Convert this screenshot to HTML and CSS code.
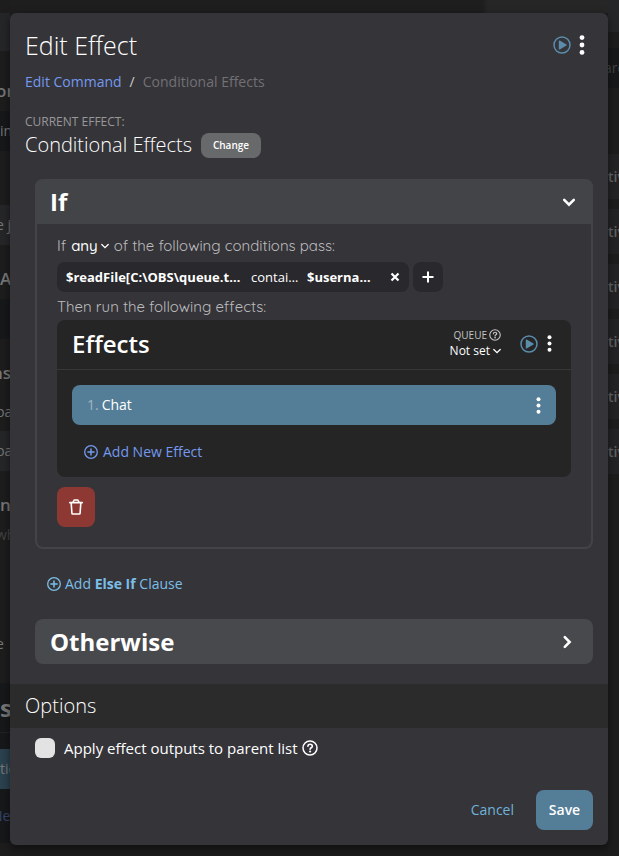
FILE: index.html
```html
<!DOCTYPE html>
<html lang="en">
<head>
<meta charset="utf-8">
<meta name="viewport" content="width=device-width, initial-scale=1">
<title>Edit Effect</title>
<link rel="stylesheet" href="styles.css">
</head>
<body>
<svg class="defs" aria-hidden="true">
  <symbol id="play" viewBox="0 0 18 18"><circle cx="9" cy="9" r="8" fill="none" stroke="currentColor" stroke-width="1.5"/><path d="M5.800 5v8c0 .5.5.8 1 .5l6.600-3.900c.5-.3.5-.9 0-1.200L6.800 4.500c-.5-.3-1 0-1 .5z" fill="currentColor"/></symbol>
  <symbol id="dots" viewBox="0 0 6 20"><circle cx="3" cy="2.600" r="2.400"/><circle cx="3" cy="10" r="2.400"/><circle cx="3" cy="17.400" r="2.400"/></symbol>
  <symbol id="chevron" viewBox="0 0 14 14"><path d="M2.200 4.800 7 9.600l4.800-4.800" fill="none" stroke="currentColor" stroke-width="2.600" stroke-linecap="round"/></symbol>
  <symbol id="caret" viewBox="0 0 8 8"><path d="M.8 2.500 4 5.700l3.200-3.200" fill="none" stroke="currentColor" stroke-width="1.300" stroke-linecap="round"/></symbol>
  <symbol id="help" viewBox="0 0 16 16"><circle cx="8" cy="8" r="7" fill="none" stroke="currentColor" stroke-width="1.500"/><path d="M5.900 6.300C6 5 6.900 4.300 8.100 4.300s2.200.8 2.200 1.900c0 1.600-2.200 1.500-2.200 3" fill="none" stroke="currentColor" stroke-width="1.600" stroke-linecap="round"/><circle cx="8.100" cy="11.500" r="1.100" fill="currentColor"/></symbol>
  <symbol id="add" viewBox="0 0 14 14"><circle cx="7" cy="7" r="6.300" fill="none" stroke="currentColor" stroke-width="1.300"/><path d="M7 3.900v6.200M3.900 7h6.200" stroke="currentColor" stroke-width="1.500" stroke-linecap="round"/></symbol>
</svg>
<div class="page">
  <div class="strip left" aria-hidden="true">
    <div class="h13"></div>
    <div class="h38 lit"></div>
    <div class="h60 low bold cut">or</div>
    <div class="h40 dark">in</div>
    <div class="h54"></div>
    <div class="h40 lit cut">e j</div>
    <div class="h54 low bold">A</div>
    <div class="h40 dark"></div>
    <div class="h54 low bold cut-more">ns</div>
    <div class="h38 cut">pa</div>
    <div class="h40 lit cut">pa</div>
    <div class="h54 low bold">n</div>
    <div class="h40 faint top cut">wh</div>
    <div class="h60"></div>
    <div class="h38 cut">e</div>
    <div class="h20"></div>
    <div class="h50 dark big line">s</div>
    <div class="h16 dark"></div>
    <div class="h40 blue">tic</div>
    <div class="h54 dark link cut-more">Ne</div>
    <div class="rest"></div>
  </div>
  <main class="stage">
    <section class="modal" role="dialog" aria-labelledby="title">
      <header class="head">
        <div class="row">
          <h1 id="title">Edit Effect</h1>
          <button class="icon accent" aria-label="Run effect"><svg class="i18"><use href="#play"/></svg></button>
          <button class="icon" aria-label="More options"><svg class="dots"><use href="#dots"/></svg></button>
        </div>
        <nav class="crumbs"><a href="#">Edit Command</a><b>/</b><span>Conditional Effects</span></nav>
      </header>
      <div class="current">
        <div class="label">CURRENT EFFECT:</div>
        <div class="row"><h2>Conditional Effects</h2><button class="change">Change</button></div>
      </div>
      <div class="clauses">
        <section class="clause">
          <button class="bar"><span>If</span><svg class="i14"><use href="#chevron"/></svg></button>
          <div class="body">
            <div class="sentence">If <button class="pick">any<svg class="i8"><use href="#caret"/></svg></button> of the following conditions pass:</div>
            <div class="conditions">
              <div class="condition"><b class="lhs">$readFile[C:\OBS\queue.txt]</b><span class="op">contains</span><b class="rhs">$username</b><button class="icon" aria-label="Remove condition"><svg class="i10" viewBox="0 0 10 10"><path d="M1.500 1.500l7 7M8.500 1.500l-7 7" stroke="currentColor" stroke-width="2.200"/></svg></button></div>
              <button class="plus" aria-label="Add condition"><svg class="i12" viewBox="0 0 12 12"><path d="M6 .5v11M.5 6h11" stroke="currentColor" stroke-width="2"/></svg></button>
            </div>
            <div class="then">Then run the following effects:</div>
            <section class="effects">
              <header class="effects-head">
                <h3>Effects</h3>
                <div class="queue"><div class="queue-label">QUEUE<svg class="i12"><use href="#help"/></svg></div><button class="pick small">Not set<svg class="i8"><use href="#caret"/></svg></button></div>
                <button class="icon accent" aria-label="Run effects"><svg class="i18"><use href="#play"/></svg></button>
                <button class="icon" aria-label="Effect list options"><svg class="dots small"><use href="#dots"/></svg></button>
              </header>
              <div class="effects-list">
                <div class="effect"><span class="num">1.</span><span class="name">Chat</span><button class="icon" aria-label="Chat options"><svg class="dots small"><use href="#dots"/></svg></button></div>
                <button class="add"><svg class="i14"><use href="#add"/></svg>Add New Effect</button>
              </div>
            </section>
            <button class="delete" aria-label="Delete clause"><svg class="trash" viewBox="0 0 14 16"><path d="M.7 3.600h12.600M4 3.400l.8-1.900c.1-.3.400-.5.700-.5h3c.3 0 .6.2.7.500l.8 1.900M2.200 4l.7 10.200c0 .5.400.8.900.8h6.400c.5 0 .9-.3.900-.8L11.800 4" fill="none" stroke="currentColor" stroke-width="1.600" stroke-linecap="round"/></svg></button>
          </div>
        </section>
        <button class="add clause-add"><svg class="i14"><use href="#add"/></svg><span>Add <b>Else If</b> Clause</span></button>
        <button class="bar otherwise"><span>Otherwise</span><svg class="i14 side"><use href="#chevron"/></svg></button>
      </div>
      <h2 class="options-title">Options</h2>
      <div class="options"><input type="checkbox" id="apply"><label for="apply">Apply effect outputs to parent list</label><svg class="i16"><use href="#help"/></svg></div>
      <footer class="foot"><button class="cancel">Cancel</button><button class="save">Save</button></footer>
    </section>
  </main>
  <div class="strip right" aria-hidden="true">
    <div class="h32 lit"></div>
    <div class="h16"></div>
    <div class="h40 dark faint cut">arc</div>
    <div class="h66"></div>
    <div class="item">tiv</div>
    <div class="item">tiv</div>
    <div class="item">tiv</div>
    <div class="item">tiv</div>
    <div class="item">tiv</div>
    <div class="item">tiv</div>
    <div class="rest"></div>
  </div>
</div>
</body>
</html>
```
FILE: styles.css
```css
* { box-sizing: border-box; }
body { margin: 0; background: #1c1c1d; color: #fff; font: 14px/20px "Open Sans", "Noto Sans", sans-serif; }
h1, h2, h3 { margin: 0; }
button { margin: 0; padding: 0; border: 0; background: none; color: inherit; font: inherit; cursor: pointer; }
svg { display: block; flex: none; fill: currentColor; }
.defs { display: none; }
.i8 { width: 8px; height: 8px; }
.i10 { width: 10px; height: 10px; }
.i12 { width: 12px; height: 12px; }
.i14 { width: 14px; height: 14px; }
.i16 { width: 16px; height: 16px; }
.i18 { width: 18px; height: 18px; }
.dots { width: 6px; height: 20px; }
.dots.small { width: 5px; height: 17px; }
.side { transform: rotate(-90deg); }
.row { display: flex; align-items: center; }

.page { display: grid; grid-template-columns: 10px minmax(0, 1fr) 11px; min-height: 100vh; }
.strip { display: flex; flex-direction: column; overflow: hidden; height: 100vh; color: #777; background: #1d1d1e; }
.strip div { flex: none; display: flex; align-items: center; white-space: nowrap; }
.strip .low { align-items: flex-end; padding-bottom: 10px; }
.strip .top { align-items: flex-start; }
.strip .bold { font-size: 17px; font-weight: 600; }
.strip .big { font-size: 24px; font-weight: 700; }
.strip .lit { background: #252628; }
.strip .dark { background: #171819; }
.strip .faint { color: #444; }
.strip .line { border-bottom: 1px solid #222; }
.strip .blue { background: #2a414e; }
.strip .link { color: #35476f; }
.strip .cut { text-indent: -4px; }
.strip .cut-more { text-indent: -8px; }
.strip .rest { flex: 1; }
.h13 { height: 13px; } .h16 { height: 16px; } .h20 { height: 20px; } .h32 { height: 32px; } .h38 { height: 38px; }
.h40 { height: 40px; } .h50 { height: 50px; } .h54 { height: 54px; } .h60 { height: 60px; } .h66 { height: 66px; }
.strip .item { height: 45px; margin-bottom: 10px; background: #232325; color: #626262; font-weight: 600; }

.stage { padding: 13px 0 11px; background: linear-gradient(90deg, #1e1e1f 79%, #262627 80%) top / 100% 13px no-repeat #1c1c1d; }
.modal { position: relative; min-height: 100%; border-radius: 6px; background: #353439; box-shadow: 0 3px 9px rgba(0, 0, 0, .5); display: flex; flex-direction: column; overflow: hidden; }
.head { padding: 14px 15px 0; }
.head .row { height: 36px; gap: 8px; padding-right: 8px; }
h1 { flex: 1; font-size: 25px; line-height: 36px; font-weight: 300; }
.icon { display: flex; flex: none; }
.accent { color: #5a8cab; }
.crumbs { display: flex; gap: 8px; margin-top: 9px; color: #717174; }
.crumbs b { color: #ccc; font-weight: 400; }
.crumbs a { color: #7499ee; text-decoration: none; }
.current { padding: 22px 15px 0; }
.label { font-size: 12px; line-height: 16px; color: #98989a; }
.current .row { gap: 9px; }
h2 { font-size: 20px; line-height: 30px; font-weight: 300; }
.change { width: 60px; height: 25px; border-radius: 8px; background: #68696b; font-size: 10px; font-weight: 600; }
.clauses { padding: 19px 15px 20px 25px; }
.clause { border: 2px solid #434447; border-top: 0; border-radius: 8px; }
.bar { display: flex; align-items: center; justify-content: space-between; width: 100%; height: 45px; padding: 0 19px 0 15px; border-radius: 8px; background: #48494c; font-size: 24px; font-weight: 700; }
.clause .bar { margin: 0 -2px; width: calc(100% + 4px); padding-right: 17px; border-radius: 8px 8px 0 0; background: #434447; }
.body { padding: 10px 20px 20px; }
.sentence, .then { color: #bcbcbe; font: 15px/24px Quicksand, Lato, sans-serif; }
.sentence { display: flex; gap: 5px; }
.pick { display: flex; align-items: center; gap: 3px; color: #fff; }
.sentence .pick { font-weight: 500; }
.conditions { display: flex; gap: 4px; margin: 4px 0 3px; }
.condition { display: flex; align-items: center; width: 352px; height: 30px; padding: 0 9px; border-radius: 8px; background: #29282c; font-size: 13px; }
.condition > b, .condition > span { overflow: hidden; text-overflow: ellipsis; white-space: nowrap; }
.lhs { width: 175px; }
.op { width: 48px; margin: 0 8px 0 10px; }
.rhs { width: 66px; }
.condition .icon { margin-left: auto; }
.plus { display: flex; align-items: center; justify-content: center; width: 30px; height: 30px; border-radius: 8px; background: #29282c; }
.effects { margin-top: 1px; border-radius: 8px; background: #252525; }
.effects-head { display: flex; align-items: center; height: 50px; padding: 0 19px 2px 15px; border-bottom: 1px solid #373737; }
h3 { flex: 1; font-size: 24px; line-height: 32px; font-weight: 600; }
.queue { display: flex; flex-direction: column; align-items: flex-end; margin-right: 19px; }
.queue-label { display: flex; align-items: center; gap: 2px; font-size: 10px; line-height: 14px; color: #c5c5c5; }
.pick.small { font-size: 12px; line-height: 18px; }
.effects-head .icon + .icon { margin-left: 9px; }
.effects-list { padding: 15px; }
.effect { display: flex; align-items: center; gap: 3px; height: 40px; padding: 0 15px; border-radius: 8px; background: #547d97; }
.num { color: #a0b8c6; }
.name { flex: 1; }
.add { display: flex; align-items: center; gap: 5px; margin: 17px 12px 0; color: #7499ee; }
.delete { display: flex; align-items: center; justify-content: center; width: 38px; height: 40px; margin-top: 10px; border-radius: 8px; background: #8d3833; }
.trash { width: 14px; height: 16px; }
.clause-add { gap: 4px; margin: 25px 12px; color: #7bbfe8; }
.options-title { padding: 7px 15px; background: #2b2b2c; }
.options { display: flex; align-items: center; gap: 4px; padding: 10px 25px; }
.options input { appearance: none; width: 20px; height: 20px; margin: 0 5px 0 0; border-radius: 6px; background: #e3e3e3; }
.options label { font-size: 15px; }
.foot { display: flex; justify-content: flex-end; gap: 22px; margin-top: auto; padding: 15px; }
.cancel { color: #6fb2da; }
.save { width: 57px; height: 40px; border-radius: 8px; background: #547d97; font-weight: 600; }
```
